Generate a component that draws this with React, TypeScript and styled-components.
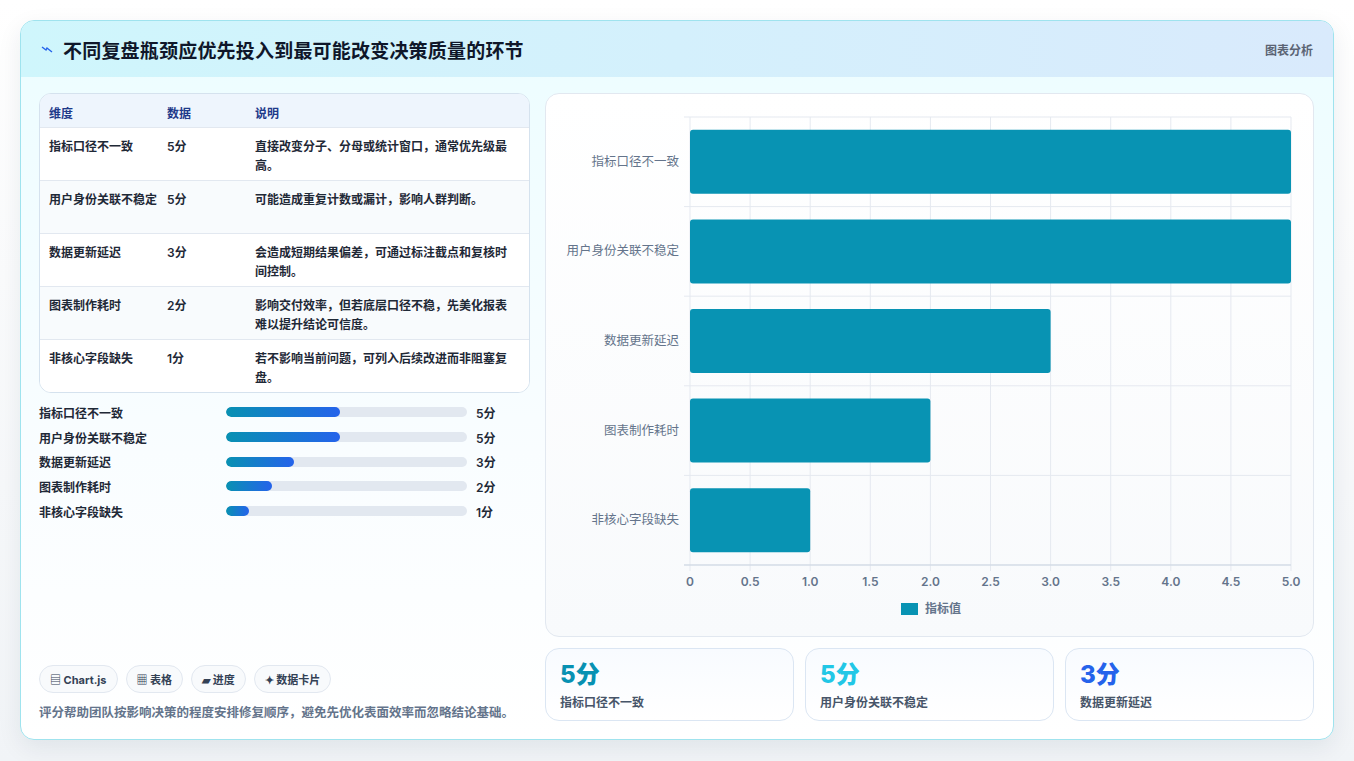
import React from "react";
import styled, { createGlobalStyle } from "styled-components";

const Global = createGlobalStyle`
  html, body { margin: 0; padding: 0; background: #f3f6f9; }
  body { font-family: Inter, "Noto Sans CJK SC", "Noto Sans", sans-serif; }
  * { box-sizing: border-box; }
`;

const Page = styled.div`
  width: 1354px; height: 761px; padding: 20px 20px 21px 20px;
  background: linear-gradient(180deg, #ffffff 0%, #f1f4f7 100%);
`;
const Card = styled.div`
  width: 1314px; height: 720px; border-radius: 14px; overflow: hidden;
  border: 1px solid #9fe3ee;
  background: linear-gradient(180deg, #ecfdff 0%, #f9fdff 60%, #ffffff 100%);
  box-shadow: 0 8px 24px rgba(15, 40, 70, 0.08);
  display: flex; flex-direction: column;
`;
const Header = styled.div`
  height: 56px; flex: none; display: flex; align-items: center; justify-content: space-between;
  padding: 0 20px 0 20px;
  background: linear-gradient(90deg, #cff6fc 0%, #d9eafc 100%);
`;
const Title = styled.h1`
  margin: 0; font-size: 19px; font-weight: 700; color: #0f172a;
  display: flex; align-items: center; gap: 10px; letter-spacing: 0.2px;
`;
const Tag = styled.span`font-size: 12px; font-weight: 600; color: #5b6474;`;
const Body = styled.div`
  flex: 1; display: grid; grid-template-columns: 491px 769px; gap: 15px;
  padding: 16px 18px 18px 18px;
`;
const Left = styled.div`display: flex; flex-direction: column;`;
const Table = styled.div`
  border: 1px solid #d5e2ee; border-radius: 12px; overflow: hidden; background: #ffffff;
`;
const Row = styled.div<{ $head?: boolean; $alt?: boolean }>`
  display: grid; grid-template-columns: 118px 88px 1fr;
  padding: ${p => (p.$head ? "10px 10px 0 9px" : "9px 10px 0 9px")};
  height: ${p => (p.$head ? "33px" : "53px")};
  background: ${p => (p.$head ? "#eef5fd" : p.$alt ? "#f8fbfd" : "#ffffff")};
  border-top: ${p => (p.$head ? "none" : "1px solid #e2e8f0")};
  font-size: 12px; line-height: 19px; font-weight: 600;
  color: ${p => (p.$head ? "#1e3a8a" : "#1f2937")};
`;
const Cell = styled.div`padding-right: 8px;`;
const Bars = styled.div`display: flex; flex-direction: column; gap: 6px; margin-top: 10px;`;
const BarRow = styled.div`
  display: grid; grid-template-columns: 178px 241px 1fr; column-gap: 9px; align-items: center;
  height: 18.7px; font-size: 12px; font-weight: 600; color: #1f2937;
`;
const Track = styled.div`height: 10px; border-radius: 5px; background: #e2e8f0; overflow: hidden;`;
const Fill = styled.div`height: 100%; border-radius: 5px; background: linear-gradient(90deg, #0891b2, #2563eb);`;
const Spacer = styled.div`flex: 1;`;
const Chips = styled.div`display: flex; gap: 8px;`;
const Chip = styled.span`
  height: 28px; padding: 0 10px; border-radius: 14px; border: 1px solid #e2e8f0; background: #f8fafc;
  display: inline-flex; align-items: center; gap: 4px; font-size: 11px; font-weight: 700; color: #334155;
`;
const Note = styled.p`
  margin: 11px 0 0; font-size: 12.5px; line-height: 17px; font-weight: 600; color: #64748b; padding-right: 10px;
`;
const Right = styled.div`display: flex; flex-direction: column; gap: 11px;`;
const ChartPanel = styled.div`
  height: 544px; border: 1px solid #e2e8f0; border-radius: 14px;
  background: linear-gradient(180deg, #ffffff, #f8fafc);
`;
const Stats = styled.div`display: grid; grid-template-columns: repeat(3, 1fr); gap: 11px;`;
const Stat = styled.div`
  height: 73px; border: 1px solid #dbe6f3; border-radius: 14px; padding: 10px 14px;
  background: linear-gradient(180deg, #f8fbff, #ffffff);
`;
const StatVal = styled.div<{ $c: string }>`font-size: 24px; font-weight: 800; line-height: 32px; color: ${p => p.$c};`;
const StatLab = styled.div`font-size: 12px; font-weight: 600; color: #475569; margin-top: 2px;`;

const data = [
  { n: "指标口径不一致", v: 5, d: "直接改变分子、分母或统计窗口，通常优先级最高。" },
  { n: "用户身份关联不稳定", v: 5, d: "可能造成重复计数或漏计，影响人群判断。" },
  { n: "数据更新延迟", v: 3, d: "会造成短期结果偏差，可通过标注截点和复核时间控制。" },
  { n: "图表制作耗时", v: 2, d: "影响交付效率，但若底层口径不稳，先美化报表难以提升结论可信度。" },
  { n: "非核心字段缺失", v: 1, d: "若不影响当前问题，可列入后续改进而非阻塞复盘。" },
];

const Chart = () => {
  const L = 144, R = 745, T = 23, B = 471;
  const band = (B - T) / 5;
  const x = (v: number) => L + ((R - L) * v) / 5;
  const ticks = Array.from({ length: 11 }, (_, i) => i * 0.5);
  return (
    <svg width="767" height="542" style={{ display: "block" }}>
      {ticks.map(t => (
        <line key={t} x1={x(t)} x2={x(t)} y1={T} y2={B + 6} stroke="#e5e9f0" />
      ))}
      {Array.from({ length: 6 }, (_, i) => (
        <line key={i} x1={L - 6} x2={R} y1={T + band * i} y2={T + band * i} stroke="#e5e9f0" />
      ))}
      <line x1={L - 6} x2={R} y1={B} y2={B} stroke="#cbd5e1" />
      {data.map((d, i) => {
        const cy = T + band * i + band / 2;
        return (
          <g key={d.n}>
            <rect x={L} y={cy - 32} width={x(d.v) - L} height={64} rx={3} fill="#0893b3" />
            <text x={L - 11} y={cy + 4} textAnchor="end" fontSize="12.5" fill="#64748b">{d.n}</text>
          </g>
        );
      })}
      {ticks.map(t => (
        <text key={t} x={x(t)} y={B + 21} textAnchor="middle" fontSize="12" fontWeight="600" fill="#64748b">
          {t === 0 ? "0" : t.toFixed(1)}
        </text>
      ))}
      <rect x={355} y={509} width={17} height={12} fill="#0893b3" />
      <text x={379} y={519} fontSize="12" fontWeight="600" fill="#64748b">指标值</text>
    </svg>
  );
};

export default function App() {
  return (
    <>
      <Global />
      <Page>
        <Card>
          <Header>
            <Title>
              <svg width="12" height="10" viewBox="0 0 12 10">
                <path d="M1 3 L5 6 L6 4 L11 8" stroke="#2563eb" strokeWidth="1.4" fill="none" />
              </svg>
              不同复盘瓶颈应优先投入到最可能改变决策质量的环节
            </Title>
            <Tag>图表分析</Tag>
          </Header>
          <Body>
            <Left>
              <Table>
                <Row $head><Cell>维度</Cell><Cell>数据</Cell><Cell>说明</Cell></Row>
                {data.map((d, i) => (
                  <Row key={d.n} $alt={i % 2 === 1}>
                    <Cell>{d.n}</Cell><Cell>{d.v}分</Cell><Cell>{d.d}</Cell>
                  </Row>
                ))}
              </Table>
              <Bars>
                {data.map(d => (
                  <BarRow key={d.n}>
                    <span>{d.n}</span>
                    <Track><Fill style={{ width: `${d.v * 9.45}%` }} /></Track>
                    <span>{d.v}分</span>
                  </BarRow>
                ))}
              </Bars>
              <Spacer />
              <Chips>
                <Chip>▤ Chart.js</Chip>
                <Chip>▦ 表格</Chip>
                <Chip>▰ 进度</Chip>
                <Chip>✦ 数据卡片</Chip>
              </Chips>
              <Note>评分帮助团队按影响决策的程度安排修复顺序，避免先优化表面效率而忽略结论基础。</Note>
            </Left>
            <Right>
              <ChartPanel><Chart /></ChartPanel>
              <Stats>
                <Stat><StatVal $c="#0891b2">5分</StatVal><StatLab>指标口径不一致</StatLab></Stat>
                <Stat><StatVal $c="#22c7e6">5分</StatVal><StatLab>用户身份关联不稳定</StatLab></Stat>
                <Stat><StatVal $c="#2563eb">3分</StatVal><StatLab>数据更新延迟</StatLab></Stat>
              </Stats>
            </Right>
          </Body>
        </Card>
      </Page>
    </>
  );
}
